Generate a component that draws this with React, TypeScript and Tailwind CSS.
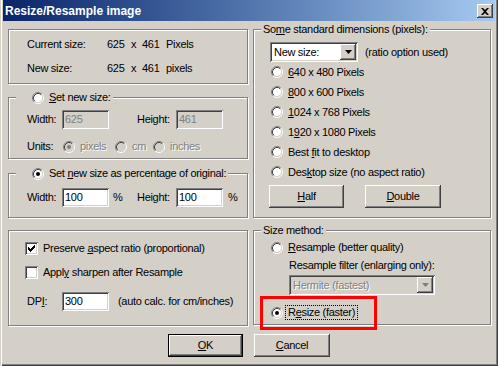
import type { ReactNode } from "react"

const sunken =
  "shadow-[inset_1px_1px_#808080,inset_-1px_-1px_#fff,inset_2px_2px_#404040,inset_-2px_-2px_#d4d0c8]"
const raised =
  "shadow-[inset_-1px_-1px_#404040,inset_1px_1px_#fff,inset_-2px_-2px_#808080,inset_2px_2px_#d4d0c8]"
const grayText = "text-[#808080] [text-shadow:1px_1px_#fff]"

function Radio({ checked = false, disabled = false }: { checked?: boolean; disabled?: boolean }) {
  return (
    <svg width="12" height="12" viewBox="0 0 12 12" className="shrink-0">
      <circle cx="6" cy="6" r="4.5" fill={disabled ? "#d4d0c8" : "#fff"} />
      <path d="M2.11 9.89A5.5 5.5 0 0 1 9.89 2.11" fill="none" stroke="#808080" />
      <path d="M9.89 2.11A5.5 5.5 0 0 1 2.11 9.89" fill="none" stroke="#fff" />
      <path d="M2.82 9.18A4.5 4.5 0 0 1 9.18 2.82" fill="none" stroke="#404040" />
      <path d="M9.18 2.82A4.5 4.5 0 0 1 2.82 9.18" fill="none" stroke="#d4d0c8" />
      {checked && <circle cx="6" cy="6" r="2" fill={disabled ? "#808080" : "#000"} />}
    </svg>
  )
}

function Check({ checked = false }: { checked?: boolean }) {
  return (
    <div className={`flex h-[13px] w-[13px] shrink-0 items-center justify-center bg-white ${sunken}`}>
      {checked && (
        <svg width="7" height="7" viewBox="0 0 7 7">
          <path d="M0 2h1v1h1v1h1V3h1V2h1V1h1V0h1v3H6v1H5v1H4v1H3v1H2V6H1V5H0z" fill="#000" />
        </svg>
      )}
    </div>
  )
}

function Field({ value, disabled = false }: { value: string; disabled?: boolean }) {
  return (
    <div
      className={`flex h-[19px] w-[47px] shrink-0 items-center pl-[3px] ${sunken} ${
        disabled ? "bg-[#d4d0c8] text-[#808080]" : "bg-white"
      }`}
    >
      {value}
    </div>
  )
}

function Combo({ value, disabled = false, className }: { value: string; disabled?: boolean; className: string }) {
  return (
    <div
      className={`flex h-[20px] shrink-0 items-center p-[2px] ${sunken} ${
        disabled ? "bg-[#d4d0c8]" : "bg-white"
      } ${className}`}
    >
      <span className={`flex-1 pl-[2px] ${disabled ? grayText : ""}`}>{value}</span>
      <span className={`flex h-[16px] w-[16px] items-center justify-center bg-[#d4d0c8] ${raised}`}>
        <svg width="7" height="4" viewBox="0 0 7 4">
          <path d="M0 0h7L3.5 4z" fill={disabled ? "#808080" : "#000"} />
        </svg>
      </span>
    </div>
  )
}

function Btn({ children, width, isDefault = false }: { children: ReactNode; width: string; isDefault?: boolean }) {
  return (
    <div
      className={`flex h-[23px] shrink-0 items-center justify-center bg-[#d4d0c8] ${width} ${
        isDefault ? "border border-black" : ""
      }`}
    >
      <div className={`flex h-full w-full items-center justify-center ${raised}`}>{children}</div>
    </div>
  )
}

function Group({ label, className, children }: { label?: ReactNode; className: string; children: ReactNode }) {
  return (
    <div className={`relative border border-[#808080] shadow-[inset_1px_1px_#fff,1px_1px_#fff] ${className}`}>
      {label && (
        <div className="absolute -top-[7px] left-[7px] flex h-[13px] items-center gap-[5px] bg-[#d4d0c8] px-[2px]">
          {label}
        </div>
      )}
      {children}
    </div>
  )
}

function RadioRow({ children, checked = false }: { children: ReactNode; checked?: boolean }) {
  return (
    <div className="flex h-[20px] items-center gap-[5px] pl-[1px]">
      <Radio checked={checked} />
      <span>{children}</span>
    </div>
  )
}

export default function App() {
  return (
    <div className="flex h-[366px] w-[498px] flex-col bg-[#d4d0c8] px-[3px] pb-[3px] font-['Liberation_Sans',Arial,sans-serif] text-[11px] leading-[13px] tracking-[-0.3px] text-black shadow-[inset_1px_0_#d4d0c8,inset_2px_0_#fff,inset_-1px_-1px_#404040,inset_-2px_-2px_#808080]">
      {/* title bar */}
      <div className="flex h-[21px] shrink-0 items-center justify-between bg-linear-to-r from-[#0a246a] to-[#a6caf0] pl-[2px] pr-[2px] pt-[1px]">
        <span className="text-[12px] font-bold tracking-normal text-white">Resize/Resample image</span>
        <div className={`flex h-[14px] w-[16px] items-center justify-center bg-[#d4d0c8] ${raised}`}>
          <svg width="8" height="7" viewBox="0 0 8 7">
            <path d="M0 0h2l2 2 2-2h2L5 3.5 8 7H6L4 5 2 7H0l3-3.5z" fill="#000" />
          </svg>
        </div>
      </div>

      <div className="flex gap-[5px] pl-[5px] pt-[8px]">
        {/* left column */}
        <div className="flex w-[240px] flex-col">
          <Group className="h-[55px] pl-[18px] pt-[8px]">
            <div className="flex h-[13px] items-center">
              <span className="w-[80px]">Current size:</span>
              <span className="w-[24px]">625</span>
              <span className="w-[11px]">x</span>
              <span className="w-[24px]">461</span>
              <span>Pixels</span>
            </div>
            <div className="mt-[11px] flex h-[13px] items-center">
              <span className="w-[80px]">New size:</span>
              <span className="w-[24px]">625</span>
              <span className="w-[11px]">x</span>
              <span className="w-[24px]">461</span>
              <span>pixels</span>
            </div>
          </Group>

          <Group
            className="mt-[13px] h-[62px] pl-[18px] pt-[12px]"
            label={
              <div className="ml-[14px] flex items-center gap-[5px]">
                <Radio />
                <span>
                  <u>S</u>et new size:
                </span>
              </div>
            }
          >
            <div className="flex h-[19px] items-center">
              <span className="w-[35px]">Width:</span>
              <Field value="625" disabled />
              <span className="ml-[28px] w-[39px]">Height:</span>
              <Field value="461" disabled />
            </div>
            <div className="mt-[11px] flex h-[13px] items-center">
              <span className="w-[36px]">Units:</span>
              <div className="flex w-[52px] items-center gap-[5px]">
                <Radio checked disabled />
                <span className={grayText}>pixels</span>
              </div>
              <div className="flex w-[38px] items-center gap-[5px]">
                <Radio disabled />
                <span className={grayText}>cm</span>
              </div>
              <div className="flex items-center gap-[5px]">
                <Radio disabled />
                <span className={grayText}>inches</span>
              </div>
            </div>
          </Group>

          <Group
            className="mt-[14px] h-[45px] pl-[18px] pt-[14px]"
            label={
              <div className="ml-[14px] flex items-center gap-[5px]">
                <Radio checked />
                <span>
                  Set <u>n</u>ew size as percentage of original:
                </span>
              </div>
            }
          >
            <div className="flex h-[19px] items-center">
              <span className="w-[35px]">Width:</span>
              <Field value="100" />
              <span className="ml-[4px] w-[24px]">%</span>
              <span className="w-[39px]">Height:</span>
              <Field value="100" />
              <span className="ml-[5px]">%</span>
            </div>
          </Group>

          <Group className="mt-[12px] h-[96px] pl-[16px] pt-[11px]">
            <div className="flex h-[13px] items-center gap-[5px]">
              <Check checked />
              <span>
                Preserve <u>a</u>spect ratio (proportional)
              </span>
            </div>
            <div className="mt-[11px] flex h-[13px] items-center gap-[5px]">
              <Check />
              <span>
                Appl<u>y</u> sharpen after Resample
              </span>
            </div>
            <div className="ml-[2px] mt-[13px] flex h-[19px] items-center">
              <span className="w-[35px]">
                DP<u>I</u>:
              </span>
              <Field value="300" />
              <span className="ml-[9px]">(auto calc. for cm/inches)</span>
            </div>
          </Group>
        </div>

        {/* right column */}
        <div className="flex w-[238px] flex-col">
          <Group
            className="h-[189px] pl-[16px] pt-[12px]"
            label={
              <span>
                So<u>m</u>e standard dimensions (pixels):
              </span>
            }
          >
            <div className="flex items-center gap-[7px]">
              <Combo value="New size:" className="w-[88px]" />
              <span>(ratio option used)</span>
            </div>
            <RadioRow>
              <u>6</u>40 x 480 Pixels
            </RadioRow>
            <RadioRow>
              <u>8</u>00 x 600 Pixels
            </RadioRow>
            <RadioRow>
              <u>1</u>024 x 768 Pixels
            </RadioRow>
            <RadioRow>
              1<u>9</u>20 x 1080 Pixels
            </RadioRow>
            <RadioRow>
              Best <u>f</u>it to desktop
            </RadioRow>
            <RadioRow>
              Des<u>k</u>top size (no aspect ratio)
            </RadioRow>
            <div className="-ml-[1px] mt-[3px] flex gap-[21px]">
              <Btn width="w-[75px]">
                <span>
                  <u>H</u>alf
                </span>
              </Btn>
              <Btn width="w-[76px]">
                <span>
                  <u>D</u>ouble
                </span>
              </Btn>
            </div>
          </Group>

          <Group className="mt-[12px] h-[95px] pl-[17px] pt-[10px]" label={<span>Size method:</span>}>
            <div className="flex h-[13px] items-center gap-[5px]">
              <Radio />
              <span>
                <u>R</u>esample (better quality)
              </span>
            </div>
            <div className="ml-[18px] mt-[5px] flex h-[13px] items-center">Resample filter (enlarging only):</div>
            <Combo value="Hermite (fastest)" disabled className="ml-[18px] mt-[3px] w-[146px]" />
            <div className="mt-[11px] flex h-[13px] items-center gap-[3px]">
              <Radio checked />
              <span className="px-[2px] outline outline-1 outline-dotted outline-black">
                R<u>e</u>size (faster)
              </span>
            </div>
            <div className="absolute left-[6px] top-[65px] h-[34px] w-[117px] border-[3px] border-[#f00]" />
          </Group>
        </div>
      </div>

      <div className="mt-[8px] flex justify-center gap-[11px]">
        <Btn width="w-[75px]" isDefault>
          <span>
            <u>O</u>K
          </span>
        </Btn>
        <Btn width="w-[76px]">
          <span>
            <u>C</u>ancel
          </span>
        </Btn>
      </div>
    </div>
  )
}
